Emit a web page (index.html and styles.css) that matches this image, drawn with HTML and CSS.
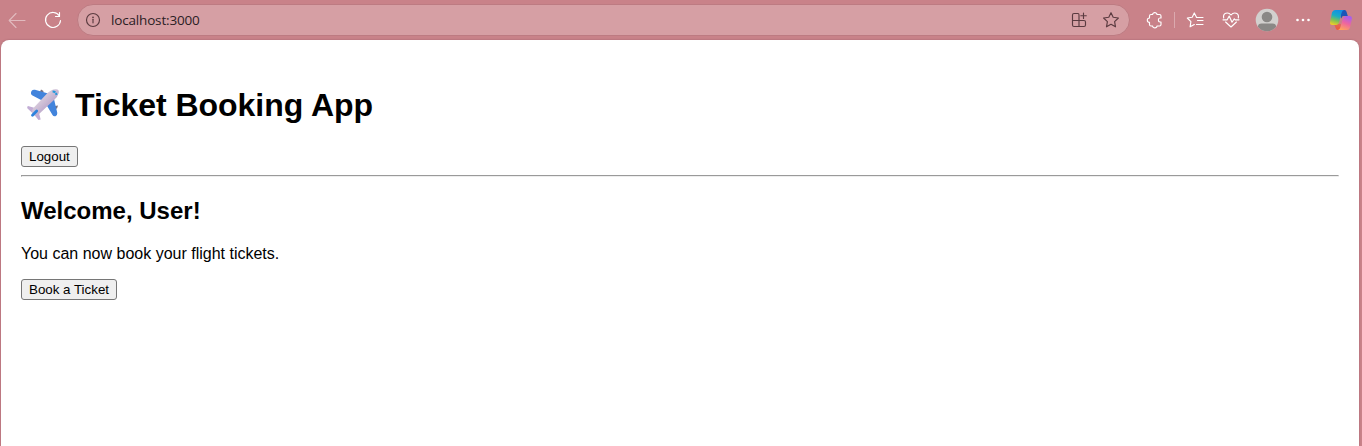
FILE: index.html
```html
<!DOCTYPE html>
<html lang="en">
<head>
<meta charset="utf-8">
<title>Ticket Booking App</title>
<link rel="stylesheet" href="styles.css">
</head>
<body>
<header class="toolbar">
  <svg class="icon back" width="18" height="18" viewBox="0 0 18 18"><path d="M17 9.5H1.2M8 2.5L1.2 9.5L8 16.5"/></svg>
  <svg class="icon reload" width="18" height="18" viewBox="0 0 18 18"><path d="M15.4 5A7.5 7.5 0 1 0 16.5 9.5M15.5 1.5V5.5H11.5"/></svg>
  <div class="address">
    <svg class="icon dark" width="16" height="16" viewBox="0 0 16 16"><circle cx="8" cy="8" r="6.5"/><path d="M8 7.3V10.8"/><circle class="dot" cx="8" cy="5.3" r=".9"/></svg>
    <span class="url">localhost:3000</span>
    <svg class="icon dark apps" width="18" height="18" viewBox="0 0 18 18"><path d="M8 2.5H4Q2.5 2.5 2.5 4V14Q2.5 15.5 4 15.5H14Q15.5 15.5 15.5 14V11Q15.5 9.5 14 9.5H2.5M9 9.5V4Q9 2.5 8 2.5M9 9.5V15.5M13.5 2V7.5M10.8 4.7H16.3"/></svg>
    <svg class="icon dark star" width="18" height="18" viewBox="0 0 18 18"><path d="M9 1.7L11.2 6.3L16.4 7L12.6 10.6L13.5 15.8L9 13.3L4.5 15.8L5.4 10.6L1.6 7L6.8 6.3Z"/></svg>
  </div>
  <svg class="icon puzzle" width="18" height="18" viewBox="0 0 18 18"><path d="M5 3.5H6.6C6.6 1 11 1 11 3.5H13.5Q15 3.5 15 5V7H14C11.8 7 11.8 11 14 11H15V13.5Q15 15 13.5 15H11C11 17.5 6.6 17.5 6.6 15H5Q3.5 15 3.5 13.5V11.3C.6 11.3 .6 7 3.5 7V5Q3.5 3.5 5 3.5Z"/></svg>
  <i class="divider"></i>
  <svg class="icon favorites" width="18" height="18" viewBox="0 0 18 18"><path d="M10.5 6.2L8.3 1.9L6.2 6.3L1.3 7L4.9 10.6L4.1 15.8L8.3 13.5M10.5 6.5H17M11.5 9.5H17M10.5 13.5H17"/></svg>
  <svg class="icon health" width="18" height="18" viewBox="0 0 18 18"><path d="M1.7 7C.6 2.2 6 .3 9 4C12 .3 17.4 2.2 16.3 7M1 8.8H5.2L7.2 5L10 11.2L12.3 7.8L13.2 8.8H17M3.6 11L9 16L14.4 11"/></svg>
  <svg class="avatar" width="24" height="24" viewBox="0 0 24 24"><defs><clipPath id="face"><circle cx="12" cy="12" r="11.3"/></clipPath></defs><g clip-path="url(#face)"><path fill="#d2d0ce" d="M0 0H24V24H0Z"/><circle cx="12" cy="9" r="5.3" fill="#8a8886"/><path fill="#8a8886" d="M3 24V18.5Q3 15.5 6.5 15.5H17.5Q21 15.5 21 18.5V24Z"/></g></svg>
  <svg class="more" width="16" height="6" viewBox="0 0 16 6"><circle cx="2.5" cy="3" r="1.3"/><circle cx="8" cy="3" r="1.3"/><circle cx="13.5" cy="3" r="1.3"/></svg>
  <svg class="copilot" width="22" height="20" viewBox="0 0 22 20">
    <defs>
      <linearGradient id="cool" x1=".6" y1="0" x2=".3" y2="1"><stop offset="0" stop-color="#118fe6"/><stop offset=".4" stop-color="#1aabc5"/><stop offset=".7" stop-color="#7ec056"/><stop offset="1" stop-color="#edcc28"/></linearGradient>
      <linearGradient id="warm" x1=".7" y1="0" x2=".3" y2="1"><stop offset="0" stop-color="#a45ff0"/><stop offset=".5" stop-color="#ee659f"/><stop offset="1" stop-color="#ffa35e"/></linearGradient>
      <linearGradient id="fold" x1="0" y1="0" x2="0" y2="1"><stop offset="0" stop-color="#df7167"/><stop offset="1" stop-color="#ee5735"/></linearGradient>
    </defs>
    <path fill="#1a55b8" d="M10 0H14.5Q16.2 0 16.6 2L17.8 6H14Q12 6 11 9Z"/>
    <path fill="url(#fold)" d="M4 14H8Q10.3 14 11 11L10.5 20H8Q6 20 5.6 18Z"/>
    <path fill="url(#cool)" d="M5 0H14Q12.2 .5 11.5 3L9.2 12Q8.4 15 6 15H2Q-.2 15 0 12.5L2 2.5Q2.8 0 5 0Z"/>
    <path fill="url(#warm)" d="M16 6H20Q22 6 22 8.5L20 17.5Q19.3 20 17 20H8Q9.8 19.6 10.5 17L12.8 8.5Q13.5 6 16 6Z"/>
    <path fill="#c98289" d="M12.4 6.5L14.4 6Q13 7 12.3 10L10.9 14H9.3Z"/>
  </svg>
</header>
<main class="page">
  <h1 class="title">
    <svg class="plane" width="34" height="34" viewBox="0 0 34 34">
      <defs><linearGradient id="body" x1=".3" y1=".3" x2=".7" y2=".7"><stop offset="0" stop-color="#ddd1de"/><stop offset="1" stop-color="#b7a2c9"/></linearGradient></defs>
      <path d="M14 4L15 1.5L17.5 3L17 6M29 18L32 17.5L31 20.5L28 21" fill="#77717e"/>
      <path fill="#4284dc" d="M5.5 3Q7 1.2 9 1.8L23 5.8L17 13L6.5 7.5Q4 6 5.5 3ZM28 11L31.3 25Q31.5 27.5 29.5 28.2Q27.5 28.8 26.5 27L20.5 17Z"/>
      <path fill="#c2add5" d="M2 18L9 20L13 25L14.7 31.5L12.5 32L8 26.5L1.5 20.5Q.5 18.8 2 18Z"/>
      <path fill="url(#body)" d="M7 20.5L21.5 5Q26 .7 30 1.2Q33.5 1.5 32.7 5Q32 8.5 28 12L12.5 26.5Q9.5 28.8 7.2 26.5Q5 24 7 20.5Z"/>
      <path fill="none" stroke="#2499dd" stroke-width="2" stroke-dasharray="3 .8" d="M26.6 3.4Q30 3.5 30.5 7"/>
      <path fill="none" stroke="#2d83dd" stroke-width="2.8" stroke-linecap="round" d="M6.5 27.2L10.7 23"/>
    </svg>
    <span>Ticket Booking App</span>
  </h1>
  <button class="action">Logout</button>
  <hr class="rule">
  <h2 class="welcome">Welcome, User!</h2>
  <p class="message">You can now book your flight tickets.</p>
  <button class="action">Book a Ticket</button>
</main>
</body>
</html>
```
FILE: styles.css
```css
* { box-sizing: border-box; }
body {
  margin: 0;
  height: 446px;
  overflow: hidden;
  display: flex;
  flex-direction: column;
  background: #c98289;
  color: #000;
  font-family: "Liberation Sans", Arial, sans-serif;
}
.toolbar {
  flex: 0 0 40px;
  display: flex;
  align-items: center;
  padding-left: 8px;
}
.toolbar > * { flex-shrink: 0; }
.icon {
  fill: none;
  stroke: #fff;
  stroke-width: 1.15;
  stroke-linejoin: round;
  stroke-linecap: round;
}
.back { opacity: .45; }
.reload { margin-left: 18px; }
.address {
  width: 1053px;
  height: 32px;
  margin-left: 15px;
  padding: 0 9px 0 7px;
  display: flex;
  align-items: center;
  background: #d69fa4;
  border: 1px solid #bd7b82;
  border-radius: 16px;
}
.dark { stroke: #5b3b40; }
.dark .dot { fill: #5b3b40; stroke: none; }
.url {
  margin-left: 10px;
  color: #2b2024;
  font: 13.5px/20px "Open Sans", "Noto Sans", sans-serif;
  letter-spacing: -.17px;
}
.apps { margin-left: auto; }
.star { margin-left: 14px; }
.puzzle { margin-left: 16px; }
.divider { width: 1px; height: 16px; margin-left: 10px; background: #dba9ae; }
.favorites { margin-left: 11px; }
.health { margin-left: 18px; }
.avatar { margin-left: 15px; }
.more { margin-left: 16px; fill: #fff; }
.copilot { margin-left: 19px; }
.page {
  flex: 1;
  margin: 0 3px 0 1px;
  padding: 43px 20px 0;
  background: #fff;
  border-radius: 8px 8px 0 0;
  box-shadow: 0 0 2px #9e606a;
}
.title {
  height: 44px;
  margin: 0 0 19px;
  padding-left: 5px;
  display: flex;
  align-items: center;
  gap: 15px;
  font-size: 32px;
  line-height: 44px;
  letter-spacing: -.04px;
  font-weight: bold;
}
.plane { display: block; }
.action {
  display: block;
  height: 21px;
  margin: 0;
  padding: 1px 7px;
  border: 1px solid #767676;
  border-radius: 3px;
  background: #efefef;
  color: #000;
  font: 13.333px/17px "Liberation Sans", Arial, sans-serif;
}
.rule {
  margin: 8px 0 0;
  height: 2px;
  border: 1px solid;
  border-color: #9a9a9a #eee #eee #9a9a9a;
}
.welcome {
  margin: 20px 0 0;
  font-size: 24px;
  line-height: 27px;
}
.message {
  margin: 20px 0 16px;
  font-size: 16px;
  line-height: 19px;
}
```
